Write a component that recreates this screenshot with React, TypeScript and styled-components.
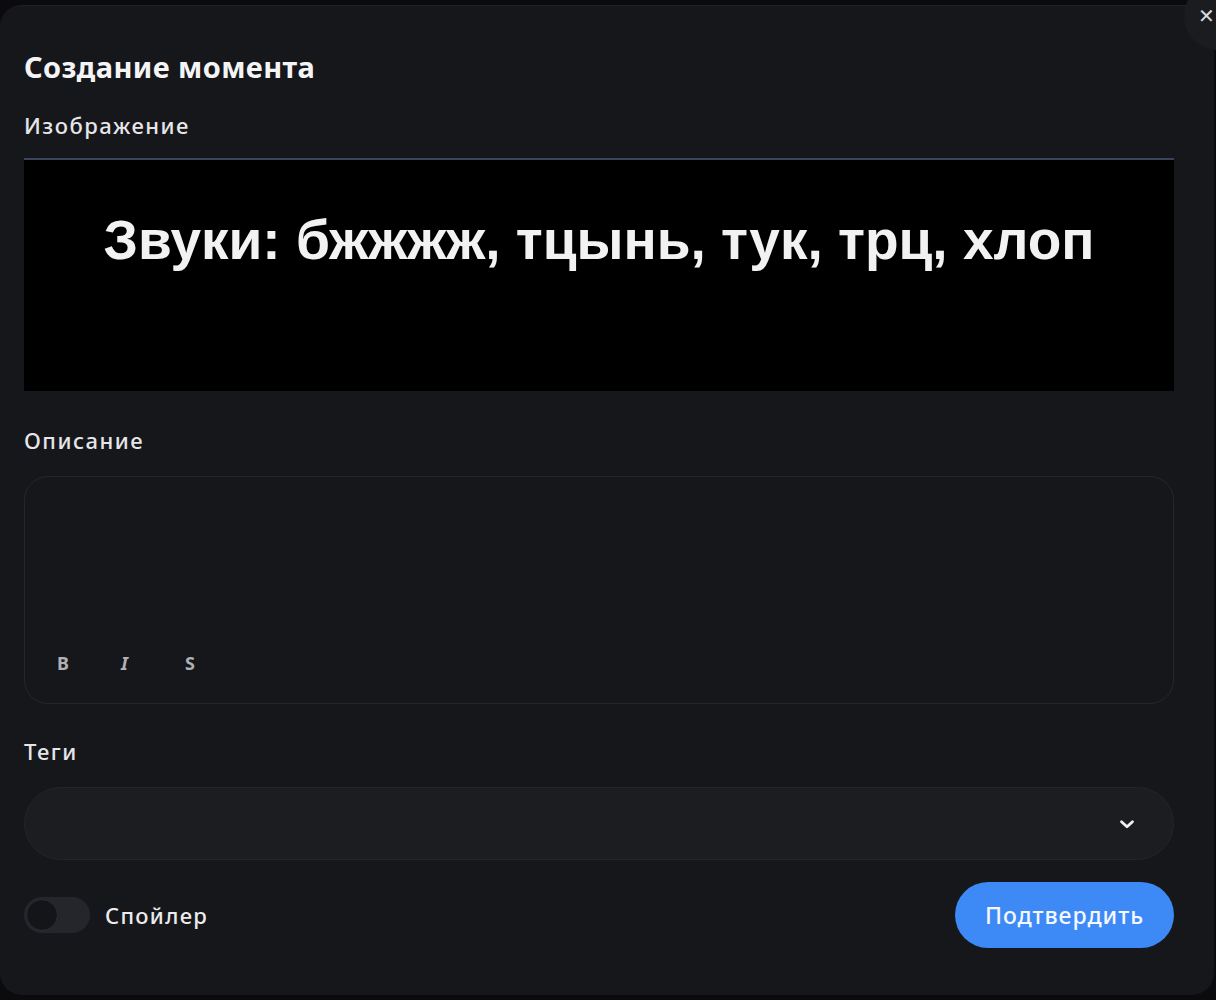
import React, { useState } from "react";
import styled, { createGlobalStyle } from "styled-components";

const GlobalStyle = createGlobalStyle`
  body {
    margin: 0;
    background: #0b0b0d;
    font-family: "Noto Sans", "Open Sans", sans-serif;
    color: #ececef;
  }
`;

const Backdrop = styled.div`
  width: 1216px;
  height: 1000px;
  padding-top: 5px;
  box-sizing: border-box;
  overflow: hidden;
  position: relative;
`;

const Modal = styled.div`
  position: relative;
  width: 1214px;
  height: 990px;
  box-sizing: border-box;
  background: #16171a;
  border-radius: 22px;
  border-top: 1px solid #202126;
  padding: 41px 40px 0 24px;
  display: flex;
  flex-direction: column;
`;

const CloseButton = styled.button`
  position: absolute;
  top: -24px;
  right: -38px;
  width: 68px;
  height: 68px;
  border-radius: 50%;
  border: none;
  background: #1b1c20;
  color: #d8d8dc;
  font-size: 20px;
  line-height: 1;
  display: flex;
  align-items: center;
  justify-content: flex-start;
  padding: 0 0 0 14px;
  cursor: pointer;
`;

const Title = styled.h2`
  margin: 0;
  font-size: 29px;
  line-height: 40px;
  font-weight: 700;
  color: #f4f4f6;
  letter-spacing: 0.4px;
`;

const Label = styled.div<{ $top: number }>`
  margin-top: ${(p) => p.$top}px;
  font-size: 22px;
  line-height: 30px;
  font-weight: 500;
  letter-spacing: 1.5px;
  color: #e6e6ea;
`;

const Preview = styled.div`
  margin-top: 18px;
  height: 233px;
  background: #000;
  border-top: 2px solid #3a4357;
  display: flex;
  align-items: flex-start;
  justify-content: center;
  padding-top: 48px;
  box-sizing: border-box;
`;

const PreviewText = styled.span`
  font-family: "Liberation Sans", Arial, sans-serif;
  font-size: 55px;
  line-height: 64px;
  font-weight: 700;
  color: #f2f2f2;
  letter-spacing: 0px;
`;

const Editor = styled.div`
  margin-top: 21px;
  height: 228px;
  box-sizing: border-box;
  border: 1px solid #26272c;
  border-radius: 24px;
  display: flex;
  align-items: flex-end;
  padding: 0 0 26px 30px;
`;

const Toolbar = styled.div`
  display: flex;
`;

const ToolButton = styled.button<{ $italic?: boolean }>`
  width: 64px;
  height: 28px;
  border: none;
  background: transparent;
  color: #b0b0b7;
  font-family: "Noto Sans", sans-serif;
  font-size: 18px;
  font-weight: 700;
  font-style: ${(p) => (p.$italic ? "oblique 14deg" : "normal")};
  text-align: left;
  padding: 0 0 0 2px;
`;

const Select = styled.div`
  margin-top: 21px;
  height: 73px;
  box-sizing: border-box;
  background: #1c1d20;
  border: 1px solid #24252a;
  border-radius: 37px;
  display: flex;
  align-items: center;
  justify-content: flex-end;
  padding-right: 35px;
`;

const Footer = styled.div`
  margin-top: 22px;
  display: flex;
  align-items: center;
  justify-content: space-between;
`;

const SpoilerToggle = styled.label`
  display: flex;
  align-items: center;
  gap: 15px;
  font-size: 22px;
  font-weight: 500;
  letter-spacing: 1.3px;
  color: #ececef;
`;

const Track = styled.span<{ $on: boolean }>`
  width: 66px;
  height: 36px;
  border-radius: 18px;
  background: ${(p) => (p.$on ? "#3d8af7" : "#25262c")};
  display: flex;
  align-items: center;
  padding: 0 2px;
  box-sizing: border-box;
  justify-content: ${(p) => (p.$on ? "flex-end" : "flex-start")};
`;

const Knob = styled.span`
  width: 32px;
  height: 32px;
  border-radius: 50%;
  background: #141518;
  border: 1px solid #2c2d33;
  box-sizing: border-box;
`;

const SubmitButton = styled.button`
  height: 66px;
  width: 219px;
  border: none;
  border-radius: 33px;
  background: #3d8af7;
  color: #f4f8ff;
  font-family: "Noto Sans", sans-serif;
  font-size: 23px;
  font-weight: 500;
  letter-spacing: 1px;
  cursor: pointer;
`;

function Chevron() {
  return (
    <svg width="22" height="22" viewBox="0 0 24 24" fill="none">
      <path
        d="M6 9.5l6 5.5 6-5.5"
        stroke="#f2f2f4"
        strokeWidth="3"
        strokeLinecap="round"
        strokeLinejoin="round"
      />
    </svg>
  );
}

export default function App() {
  const [spoiler, setSpoiler] = useState(false);

  return (
    <>
      <GlobalStyle />
      <Backdrop>
        <Modal>
          <CloseButton aria-label="close">✕</CloseButton>
          <Title>Создание момента</Title>

          <Label $top={23}>Изображение</Label>
          <Preview>
            <PreviewText>Звуки: бжжжж, тцынь, тук, трц, хлоп</PreviewText>
          </Preview>

          <Label $top={34}>Описание</Label>
          <Editor>
            <Toolbar>
              <ToolButton>B</ToolButton>
              <ToolButton $italic>I</ToolButton>
              <ToolButton>S</ToolButton>
            </Toolbar>
          </Editor>

          <Label $top={32}>Теги</Label>
          <Select>
            <Chevron />
          </Select>

          <Footer>
            <SpoilerToggle onClick={() => setSpoiler(!spoiler)}>
              <Track $on={spoiler}>
                <Knob />
              </Track>
              Спойлер
            </SpoilerToggle>
            <SubmitButton>Подтвердить</SubmitButton>
          </Footer>
        </Modal>
      </Backdrop>
    </>
  );
}
